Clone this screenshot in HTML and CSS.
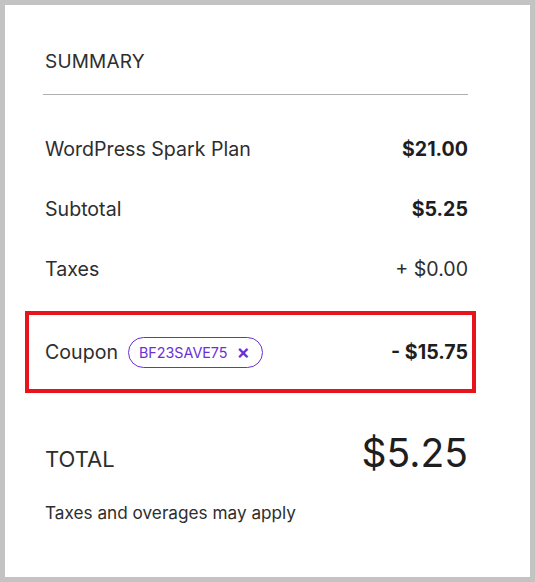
FILE: index.html
```html
<!DOCTYPE html>
<html lang="en">
<head>
  <meta charset="UTF-8">
  <meta name="viewport" content="width=device-width, initial-scale=1.0">
  <title>Summary</title>
  <link rel="stylesheet" href="styles.css">
</head>
<body>
  <div class="card">
    <h2 class="title">SUMMARY</h2>
    <div class="row">
      <span>WordPress Spark Plan</span>
      <span class="amount">$21.00</span>
    </div>
    <div class="row">
      <span>Subtotal</span>
      <span class="amount">$5.25</span>
    </div>
    <div class="row">
      <span>Taxes</span>
      <span>+ $0.00</span>
    </div>
    <div class="row coupon-row">
      <div class="coupon-label">
        <span>Coupon</span>
        <span class="chip">BF23SAVE75 <span class="chip-x">&times;</span></span>
      </div>
      <span class="amount">- $15.75</span>
      <div class="highlight"></div>
    </div>
    <div class="total">
      <span class="total-label">TOTAL</span>
      <span class="total-amount">$5.25</span>
    </div>
    <p class="note">Taxes and overages may apply</p>
  </div>
</body>
</html>
```

FILE: styles.css
```css
html, body {
  margin: 0;
  padding: 0;
}
body {
  background-color: #c3c3c3;
  padding: 5px;
  font-family: Inter, "Noto Sans", Arial, sans-serif;
  color: #2e2e2e;
}
.card {
  background-color: #fff;
  height: 572px;
  box-sizing: border-box;
  padding: 45px 62px 0 40px;
}
.title {
  margin: 0 0 0 -2px;
  padding: 0 0 21px 2px;
  font-size: 19px;
  font-weight: 400;
  letter-spacing: 0.2px;
  border-bottom: 1px solid #b0b0b0;
}
.row {
  display: flex;
  justify-content: space-between;
  align-items: center;
  font-size: 19.6px;
  height: 60px;
}
.row:first-of-type {
  margin-top: 24px;
}
.amount {
  font-weight: 700;
  color: #1e1e1e;
}
.coupon-row {
  position: relative;
  margin-top: 23px;
}
.coupon-label {
  display: flex;
  align-items: center;
  gap: 10px;
}
.chip {
  display: inline-flex;
  align-items: center;
  gap: 9px;
  height: 31px;
  box-sizing: border-box;
  padding: 0 12px 0 10px;
  border: 1px solid #6b2fd6;
  border-radius: 16px;
  color: #6b2fd6;
  font-size: 14.3px;
}
.chip-x {
  font-size: 20px;
  font-weight: 600;
  line-height: 1;
}
.highlight {
  position: absolute;
  left: -20px;
  right: -8px;
  top: -11px;
  bottom: -11px;
  border: 4px solid #e8141c;
  box-sizing: border-box;
}
.total {
  display: flex;
  justify-content: space-between;
  align-items: baseline;
  margin-top: 47px;
}
.total-label {
  font-size: 22px;
}
.total-amount {
  font-size: 39px;
  color: #1e1e1e;
}
.note {
  margin: 26px 0 0;
  font-size: 17.2px;
}
```
